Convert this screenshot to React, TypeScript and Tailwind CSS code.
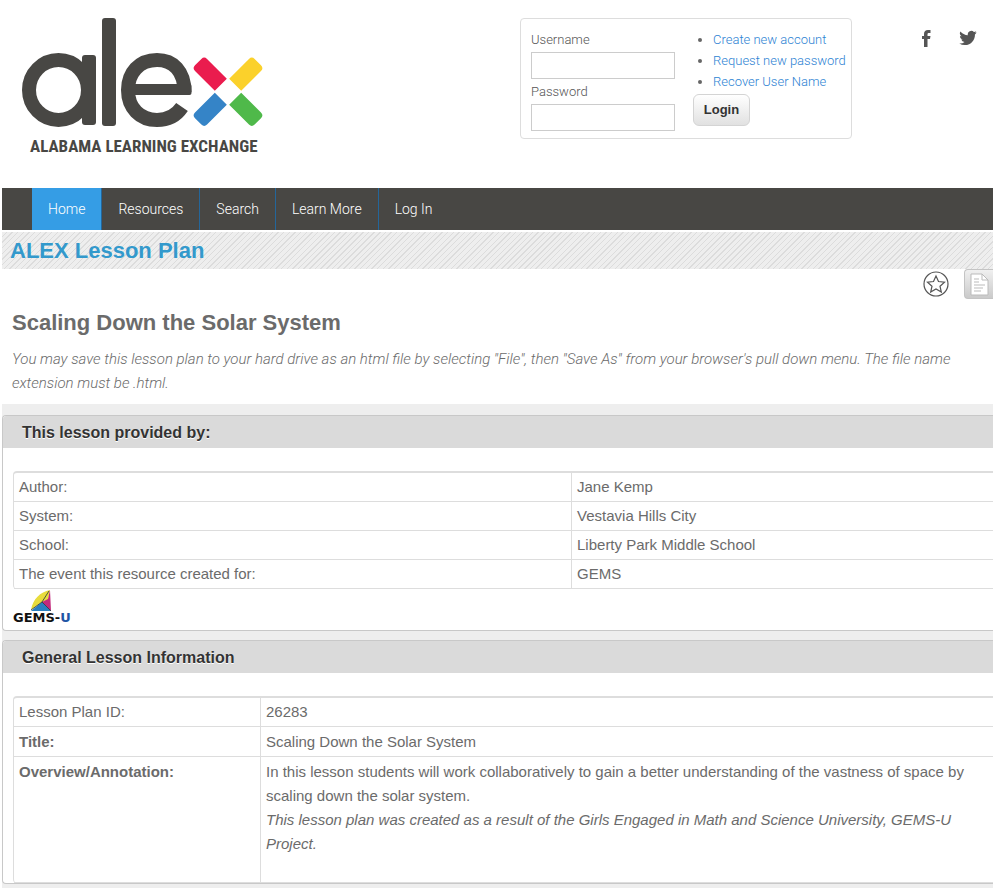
import type { ReactNode } from "react";

const navItems = ["Home", "Resources", "Search", "Learn More", "Log In"];

const providedBy = [
    { label: "Author:", value: "Jane Kemp" },
    { label: "System:", value: "Vestavia Hills City" },
    { label: "School:", value: "Liberty Park Middle School" },
    { label: "The event this resource created for:", value: "GEMS" },
];

// one arm of the x, rounded on its outer end only
const armPath = "M-16 -8.500H12Q16 -8.500 16 -4.500V4.500Q16 8.500 12 8.500H-16Z";

function AlexLogo() {
    return (
        <svg width="242" height="138" viewBox="0 0 242 138" role="img" aria-label="ALEX - Alabama Learning Exchange">
            {/* round bowls and straight stems */}
            <g fill="none" stroke="#484744" strokeWidth="14">
                <ellipse cx="36.500" cy="72" rx="29.500" ry="30" />
                <path d="M162.500 74C162.500 53 151 42 135 42C117 42 106 55 106 72C106 90 118 102 135 102C146 102 154 98 160 89" />
            </g>
            <g fill="#484744">
                <rect x="60" y="37" width="14" height="70" rx="3" />
                <rect x="80" y="0" width="14" height="108" rx="3" />
                <rect x="106" y="66" width="63.500" height="11" rx="2" />
            </g>
            <path d={armPath} fill="#ea1c4e" transform="translate(187.500 55.500) rotate(-135)" />
            <path d={armPath} fill="#fbd12b" transform="translate(224.500 55.500) rotate(-45)" />
            <path d={armPath} fill="#3584c7" transform="translate(187.500 92) rotate(135)" />
            <path d={armPath} fill="#4fb94a" transform="translate(224.500 92) rotate(45)" />
            <text x="8" y="134" fill="#484744" fontSize="17" className="font-['Liberation_Sans_Narrow','Roboto_Condensed','Liberation_Sans',sans-serif] font-bold">
                ALABAMA LEARNING EXCHANGE
            </text>
        </svg>
    );
}

function GemsLogo() {
    return (
        <svg width="60" height="34" viewBox="0 0 60 34" role="img" aria-label="GEMS-U">
            <path d="M18 20C20 9 27 2 37 0L35 10L29 12Z" fill="#e8dc3c" />
            <path d="M37 0L38 21L29 12L35 9Z" fill="#c22a7c" />
            <path d="M18 21L29 12L38 21Z" fill="#2a7fc0" />
            <path d="M18 20L29 12L36 1M29 12L38 21" fill="none" stroke="#27303a" strokeWidth="0.800" />
            <text x="0" y="32" fontSize="13" fill="#111" className="font-['DejaVu_Sans',sans-serif] font-bold">
                GEMS-<tspan fill="#1f55a5">U</tspan>
            </text>
        </svg>
    );
}

function LoginBox() {
    return (
        <form className="flex h-[121px] w-[332px] rounded border border-[#ddd] pl-2.5 pt-2.5 font-['Roboto',sans-serif] text-[13px] font-light text-[#555]" onSubmit={(e) => e.preventDefault()}>
            <div className="w-[162px]">
                <label htmlFor="username" className="block h-[23px] leading-[22px]">Username</label>
                <input id="username" type="text" className="block h-[27px] w-36 border border-[#ccc] bg-white px-1" />
                <label htmlFor="password" className="block h-[25px] leading-[25px]">Password</label>
                <input id="password" type="password" className="block h-[27px] w-36 border border-[#ccc] bg-white px-1" />
            </div>
            <div>
                <ul className="list-disc pl-5 leading-[21px] text-[#2e83d3] marker:text-[#666]">
                    <li><a href="#create">Create new account</a></li>
                    <li><a href="#request">Request new password</a></li>
                    <li><a href="#recover">Recover User Name</a></li>
                </ul>
                <button type="submit" className="mt-0.5 h-8 w-[57px] rounded-md border border-[#d4d4d4] bg-linear-to-b from-white to-[#e1e1e1] font-['Liberation_Sans',sans-serif] text-[13px] font-bold text-[#333]">
                    Login
                </button>
            </div>
        </form>
    );
}

function SocialLinks() {
    return (
        <div className="flex gap-7 pt-3 text-[#555]">
            <a href="#facebook" aria-label="Facebook">
                <svg width="9" height="17" viewBox="0 0 9 17" fill="currentColor">
                    <path d="M2 17V9H0V6H2V4C2 1.300 3.500 0 6 0H8.500V3H7C6 3 5.500 3.400 5.500 4.300V6H8.500L8 9H5.500V17Z" />
                </svg>
            </a>
            <a href="#twitter" aria-label="Twitter">
                <svg width="18" height="16" viewBox="0 1 24 22" fill="currentColor">
                    <path d="M23.950 4.570a10 10 0 0 1-2.820.77 4.960 4.960 0 0 0 2.160-2.720c-.95.560-2 .96-3.130 1.180a4.920 4.920 0 0 0-8.380 4.480C7.690 8.100 4.070 6.130 1.640 3.160a4.920 4.920 0 0 0 1.520 6.570 4.900 4.900 0 0 1-2.230-.61v.06a4.920 4.920 0 0 0 3.950 4.830 5 5 0 0 1-2.210.08 4.940 4.940 0 0 0 4.600 3.420A9.870 9.870 0 0 1 0 19.540a13.990 13.990 0 0 0 7.550 2.210c9.050 0 14-7.500 14-13.980 0-.21 0-.42-.02-.63a9.940 9.940 0 0 0 2.420-2.570z" />
                </svg>
            </a>
        </div>
    );
}

function Panel({ title, children }: { title: string; children: ReactNode }) {
    return (
        <section className="overflow-hidden rounded-l border border-r-0 border-[#c8c8c8] bg-white">
            <h3 className="h-8 bg-[#dadada] pl-[19px] text-base leading-[34px] font-bold text-[#333] [text-shadow:0_1px_0_#fff]">{title}</h3>
            <div className="pt-[23px] pl-2.5">{children}</div>
        </section>
    );
}

const tableClass = "w-full border-separate border-spacing-0 rounded-l border border-t-2 border-r-0 border-b-0 border-[#ddd]";
const labelClass = "border-r border-b border-[#ddd] px-[5px] text-left align-top";
const valueClass = "border-b border-[#ddd] px-[5px] align-top";

export default function App() {
    return (
        <div className="overflow-hidden bg-white pl-0.5 font-['Liberation_Sans',Arial,sans-serif] text-[15px] leading-6 text-[#6b6b6b]">
            <header className="flex h-[188px] items-start pt-[18px] pr-4 pl-5">
                <a href="#home"><AlexLogo /></a>
                <div className="ml-auto"><LoginBox /></div>
                <div className="ml-[70px]"><SocialLinks /></div>
            </header>

            <nav className="flex h-[42px] bg-[#484744] pl-[30px] font-['Roboto',sans-serif] text-sm leading-[42px] font-light text-white">
                {navItems.map((item) => (
                    <a key={item} href="#nav" className="border-r border-[#24669a] px-4 first:bg-[#359de5] last:border-r-0">
                        {item}
                    </a>
                ))}
            </nav>

            <h1 className="mt-0.5 h-[37px] bg-[#eee] bg-[repeating-linear-gradient(135deg,#eee_0px,#eee_3px,#dcdcdc_3px,#dcdcdc_4px)] pl-2 text-[22px] leading-[38px] font-bold text-[#3399cc]">
                ALEX Lesson Plan
            </h1>

            <div className="flex h-[31px] justify-end gap-[15px]">
                <button type="button" aria-label="Add to favorites" className="h-[30px] w-[26px]">
                    <svg width="26" height="30" viewBox="0 0 26 30" fill="none" stroke="#555">
                        <circle cx="13" cy="15" r="12" strokeWidth="1.200" />
                        <path d="M13 7L15.500 12.500L21.500 13.200L17 17.200L18.300 23L13 20L7.700 23L9 17.200L4.500 13.200L10.500 12.500Z" strokeWidth="1.200" />
                    </svg>
                </button>
                <button type="button" aria-label="View document" className="h-[30px] w-[29px] rounded-l border border-r-0 border-[#c4c4c4] bg-linear-to-b from-[#f0f0f0] to-[#cacaca] p-[3px]">
                    <svg width="24" height="24" viewBox="0 0 24 24" fill="#fff">
                        <path d="M3 1H14L20 7V22H3Z" stroke="#bbb" />
                        <path d="M14 1V7H20M6 6H11M6 9H11M6 12H17M6 15H15M6 18H13" fill="none" stroke="#bbb" />
                    </svg>
                </button>
            </div>

            <div className="px-2.5 pt-[7px] pb-[9px]">
                <h2 className="text-[22px] leading-8 font-bold">Scaling Down the Solar System</h2>
                <p className="mt-2 font-['Roboto',sans-serif] font-light italic">
                    You may save this lesson plan to your hard drive as an html file by selecting "File", then "Save As" from your browser's pull down menu. The file name extension must be .html.
                </p>
            </div>

            <main className="flex flex-col gap-[9px] bg-[#eee] pt-[11px] pb-1">
                <Panel title="This lesson provided by:">
                    <table className={tableClass}>
                        <tbody>
                            {providedBy.map(({ label, value }) => (
                                <tr key={label}>
                                    <th scope="row" className={`${labelClass} w-[57%] py-0.5 font-normal`}>{label}</th>
                                    <td className={`${valueClass} py-0.5`}>{value}</td>
                                </tr>
                            ))}
                        </tbody>
                    </table>
                    <div className="h-[41px] pt-px"><GemsLogo /></div>
                </Panel>

                <Panel title="General Lesson Information">
                    <table className={tableClass}>
                        <tbody>
                            <tr>
                                <th scope="row" className={`${labelClass} w-[247px] py-0.5 font-normal`}>Lesson Plan ID:</th>
                                <td className={`${valueClass} py-0.5`}>26283</td>
                            </tr>
                            <tr>
                                <th scope="row" className={`${labelClass} pt-[3px] pb-0.5`}>Title:</th>
                                <td className={`${valueClass} pt-[3px] pb-0.5`}>Scaling Down the Solar System</td>
                            </tr>
                            <tr>
                                <th scope="row" className={`${labelClass} pt-[3px]`}>Overview/Annotation:</th>
                                <td className={`${valueClass} pt-[3px] pb-[26px]`}>
                                    <p>In this lesson students will work collaboratively to gain a better understanding of the vastness of space by scaling down the solar system.</p>
                                    <p className="italic">This lesson plan was created as a result of the Girls Engaged in Math and Science University, GEMS-U Project.</p>
                                </td>
                            </tr>
                        </tbody>
                    </table>
                </Panel>
            </main>
        </div>
    );
}
